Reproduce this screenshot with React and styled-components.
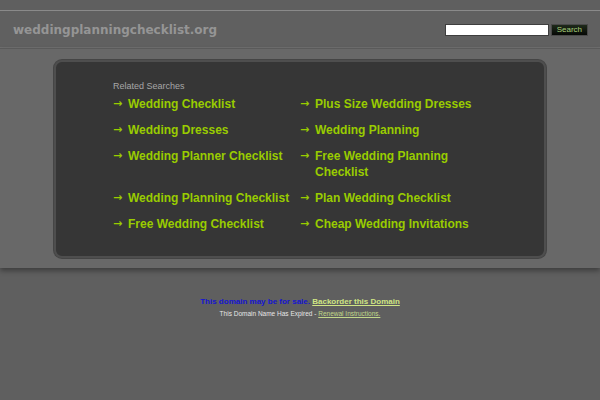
import React from "react";
import styled, { createGlobalStyle } from "styled-components";

const GlobalStyle = createGlobalStyle`
  html, body {
    margin: 0;
    padding: 0;
    background: #5f5f5f;
  }
  body {
    font-family: "Liberation Sans", Arial, sans-serif;
  }
`;

const Page = styled.div`
  min-height: 400px;
  background: #5f5f5f;
  padding-top: 10px;
  box-sizing: border-box;
`;

const Header = styled.div`
  display: flex;
  justify-content: space-between;
  align-items: center;
  height: 36px;
  padding: 0 12px 0 13px;
  border-top: 1px solid #8a8a8a;
  border-bottom: 1px solid #6f6f6f;
  background: #606060;
`;

const SiteName = styled.div`
  font-family: "DejaVu Sans", Verdana, sans-serif;
  font-weight: bold;
  font-size: 12px;
  color: #959595;
  margin-top: 2px;
`;

const SearchForm = styled.form`
  display: flex;
  align-items: center;
  gap: 2px;
  margin: 1px 0 0;
`;

const SearchInput = styled.input`
  width: 104px;
  height: 12px;
  box-sizing: border-box;
  border: 1px solid #3e3e3e;
  background: #fff;
  padding: 0;
  outline: none;
`;

const SearchButton = styled.button`
  height: 12px;
  padding: 0 5px;
  box-sizing: border-box;
  border: 1px solid #4a4a4a;
  background: linear-gradient(#1e2a1a, #050805);
  color: #a8d07a;
  font-family: "Liberation Sans", Arial, sans-serif;
  font-size: 8px;
  line-height: 10px;
  cursor: pointer;
`;

const Band = styled.div`
  background: #686868;
  border-top: 1px solid #5a5a5a;
  padding: 11px 0 10px;
  box-shadow: 0 3px 5px rgba(0, 0, 0, 0.35);
`;

const Panel = styled.div`
  width: 492px;
  margin: 0 auto;
  box-sizing: border-box;
  background: #363636;
  border: 2px solid #4e4e4e;
  border-radius: 8px;
  box-shadow: 0 0 0 1px #454545;
  padding: 18px 0 24px 57px;
`;

const Caption = styled.div`
  font-size: 9px;
  line-height: 12px;
  color: #a6a6a6;
  margin-bottom: 4px;
`;

const LinkGrid = styled.div`
  display: grid;
  grid-template-columns: 187px 187px;
  row-gap: 10px;
`;

const LinkItem = styled.a`
  display: flex;
  align-items: flex-start;
  font-size: 12px;
  font-weight: bold;
  line-height: 16px;
  color: #99cc00;
  text-decoration: none;
`;

const Arrow = styled.span`
  flex: 0 0 15px;
  font-family: "DejaVu Sans", sans-serif;
  font-size: 11px;
  line-height: 16px;
`;

const LinkText = styled.span`
  max-width: 165px;
`;

const Footer = styled.div`
  text-align: center;
  padding-top: 28px;
`;

const SaleLine = styled.div`
  font-size: 8px;
  font-weight: bold;
  line-height: 12px;
  color: #1515d0;
`;

const FooterLink = styled.a`
  color: ${(p) => p.$color};
  text-decoration: underline;
`;

const ExpiredLine = styled.div`
  font-size: 6.5px;
  line-height: 12px;
  color: #e6e6e6;
`;

const leftLinks = [
  "Wedding Checklist",
  "Wedding Dresses",
  "Wedding Planner Checklist",
  "Wedding Planning Checklist",
  "Free Wedding Checklist",
];

const rightLinks = [
  "Plus Size Wedding Dresses",
  "Wedding Planning",
  "Free Wedding Planning Checklist",
  "Plan Wedding Checklist",
  "Cheap Wedding Invitations",
];

function App() {
  const links = leftLinks.flatMap((l, i) => [l, rightLinks[i]]);
  return (
    <Page>
      <GlobalStyle />
      <Header>
        <SiteName>weddingplanningchecklist.org</SiteName>
        <SearchForm onSubmit={(e) => e.preventDefault()}>
          <SearchInput type="text" />
          <SearchButton type="submit">Search</SearchButton>
        </SearchForm>
      </Header>
      <Band>
        <Panel>
          <Caption>Related Searches</Caption>
          <LinkGrid>
            {links.map((text) => (
              <LinkItem href="#" key={text}>
                <Arrow>→</Arrow>
                <LinkText>{text}</LinkText>
              </LinkItem>
            ))}
          </LinkGrid>
        </Panel>
      </Band>
      <Footer>
        <SaleLine>
          This domain may be for sale.{" "}
          <FooterLink href="#" $color="#cfe584">
            Backorder this Domain
          </FooterLink>
        </SaleLine>
        <ExpiredLine>
          This Domain Name Has Expired -{" "}
          <FooterLink href="#" $color="#c2d88a">
            Renewal Instructions.
          </FooterLink>
        </ExpiredLine>
      </Footer>
    </Page>
  );
}

export default App;
